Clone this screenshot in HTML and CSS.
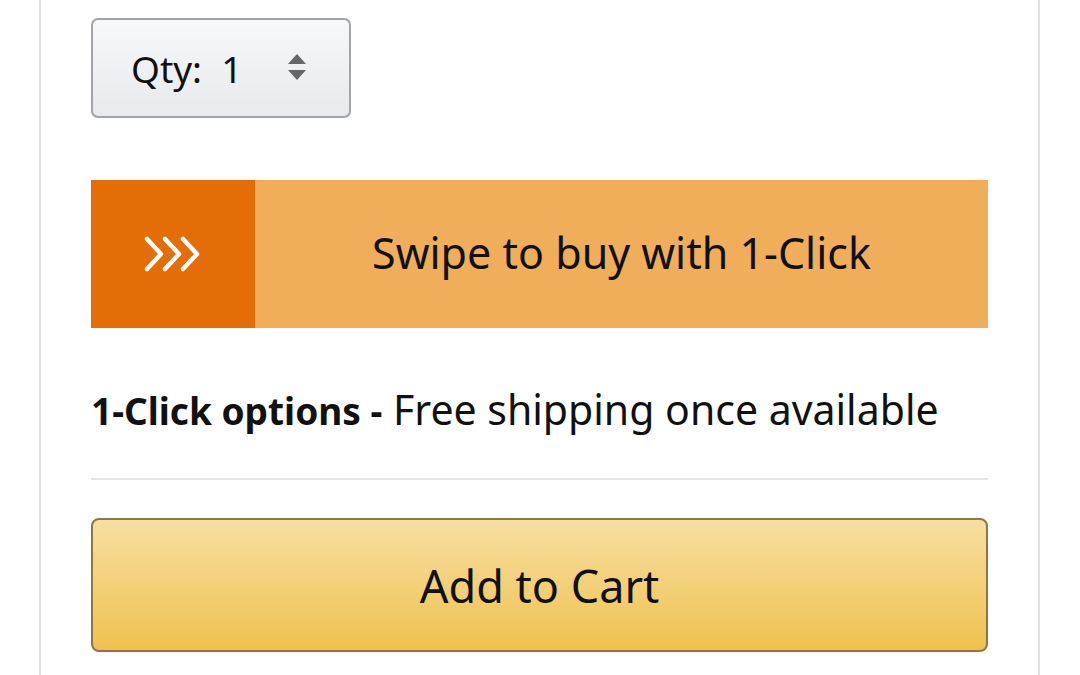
FILE: index.html
```html
<!DOCTYPE html>
<html>
<head>
<meta charset="utf-8">
<link rel="stylesheet" href="styles.css">
</head>
<body>
<div class="panel">
  <div class="qty">
    <span class="qty-label">Qty:&nbsp; 1</span>
    <svg class="qty-arrows" width="20" height="32" viewBox="0 0 20 32">
      <path d="M10 3 L19 13 L1 13 Z" fill="#666"/>
      <path d="M1 19 L19 19 L10 29 Z" fill="#666"/>
    </svg>
  </div>
  <div class="swipe">
    <div class="swipe-handle">
      <svg width="58" height="38" viewBox="0 0 58 38">
        <path d="M3 4 L17 19 L3 34 M21 4 L35 19 L21 34 M39 4 L53 19 L39 34" fill="none" stroke="#fff" stroke-width="4.5" stroke-linecap="round" stroke-linejoin="round"/>
      </svg>
    </div>
    <div class="swipe-text">Swipe to buy with 1-Click</div>
  </div>
  <div class="options"><b>1-Click options -</b> Free shipping once available</div>
  <div class="divider"></div>
  <div class="cart">Add to Cart</div>
</div>
</body>
</html>
```
FILE: styles.css
```css
html, body {
  margin: 0;
  padding: 0;
  background: #fff;
  font-family: "Noto Sans", "Open Sans", sans-serif;
  color: #111;
}
.panel {
  margin-left: 39px;
  width: 1001px;
  height: 675px;
  border-left: 2px solid #e2e2e2;
  border-right: 2px solid #e2e2e2;
  padding: 18px 50px 0 50px;
  box-sizing: border-box;
  overflow: hidden;
}
.qty {
  width: 260px;
  height: 100px;
  box-sizing: border-box;
  border: 2px solid #a2a4a8;
  border-radius: 7px;
  background: linear-gradient(#f7f8fa, #e7e9ec);
  display: flex;
  align-items: center;
  padding-left: 38px;
  padding-right: 42px;
  justify-content: space-between;
}
.qty-label {
  font-size: 37px;
  color: #111;
  margin-top: 0;
}
.qty-arrows {
  display: block;
  margin-top: -2px;
}
.swipe {
  margin-top: 62px;
  height: 148px;
  display: flex;
  background: #f0ad5a;
}
.swipe-handle {
  width: 164px;
  background: #e56d07;
  display: flex;
  align-items: center;
  justify-content: center;
}
.swipe-handle svg {
  display: block;
}
.swipe-text {
  flex: 1;
  display: flex;
  align-items: center;
  justify-content: center;
  font-size: 43px;
  color: #111;
  margin-top: -4px;
}
.options {
  margin-top: 56px;
  font-size: 41px;
  line-height: 50px;
  color: #111;
}
.options b {
  font-weight: 700;
  font-size: 37px;
}
.divider {
  margin-top: 42px;
  height: 2px;
  background: #e4e4e4;
}
.cart {
  margin-top: 38px;
  height: 134px;
  box-sizing: border-box;
  border: 2px solid #8d7745;
  border-radius: 8px;
  background: linear-gradient(#f7dea2, #efc24f);
  display: flex;
  align-items: center;
  justify-content: center;
  font-size: 45px;
  color: #111;
}
```
